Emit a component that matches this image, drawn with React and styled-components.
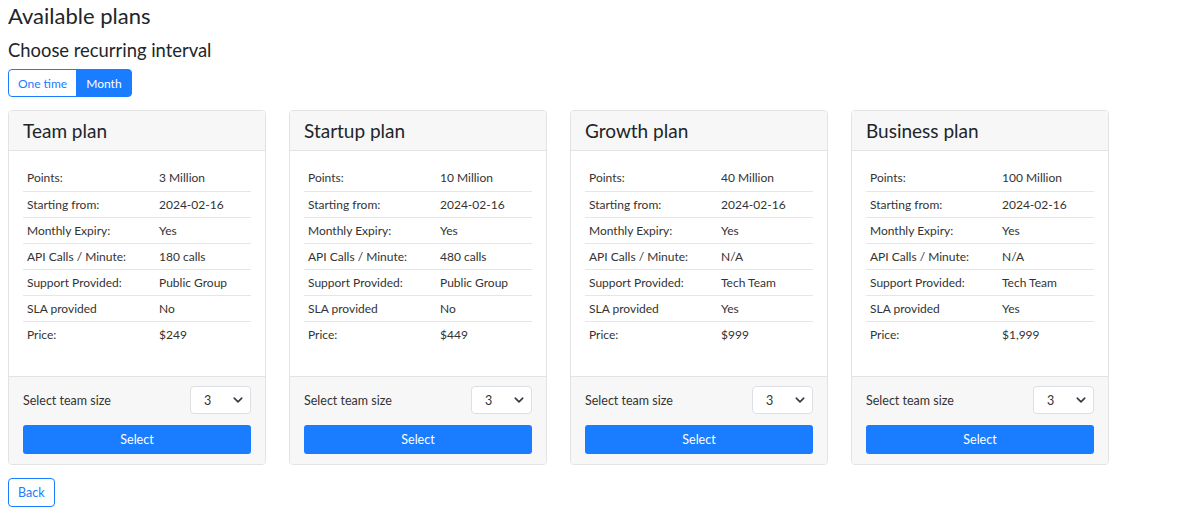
import React, { useState } from "react";
import styled, { createGlobalStyle } from "styled-components";

const Global = createGlobalStyle`
  html, body { margin: 0; padding: 0; background: #fff; }
  body { font-family: Lato, "Noto Sans", sans-serif; color: #212529; }
  * { box-sizing: border-box; }
`;

const Page = styled.div`
  padding: 3px 8px 8px;
  width: 1195px;
`;

const Title = styled.h1`
  font-size: 22px;
  font-weight: 400;
  margin: 0;
  line-height: 26px;
`;

const Subtitle = styled.h2`
  font-size: 18.4px;
  font-weight: 400;
  margin: 10px 0 8px;
  line-height: 22px;
`;

const Toggle = styled.div`
  display: inline-flex;
`;

const ToggleButton = styled.button`
  font-family: inherit;
  font-size: 12px;
  height: 28px;
  padding: 0 9px;
  border: 1px solid #1a7cff;
  background: ${(p) => (p.$active ? "#1a7cff" : "#fff")};
  color: ${(p) => (p.$active ? "#fff" : "#1a7cff")};
  cursor: pointer;
  border-radius: ${(p) => (p.$first ? "4px 0 0 4px" : "0 4px 4px 0")};
  margin-left: ${(p) => (p.$first ? "0" : "-1px")};
`;

const Grid = styled.div`
  display: grid;
  grid-template-columns: repeat(4, 258px);
  column-gap: 23px;
  margin-top: 13px;
`;

const Card = styled.div`
  border: 1px solid #e3e3e3;
  border-radius: 4px;
  display: flex;
  flex-direction: column;
  overflow: hidden;
`;

const CardHeader = styled.div`
  background: #f7f7f7;
  border-bottom: 1px solid #e3e3e3;
  height: 40px;
  display: flex;
  align-items: center;
  padding: 0 14px;
  font-size: 19px;
  line-height: 22px;
`;

const CardBody = styled.div`
  padding: 14px 14px 29px;
`;

const Table = styled.table`
  width: 100%;
  border-collapse: collapse;
  font-size: 12px;
  color: #333;
`;

const Row = styled.tr`
  height: 26px;
  & + & td { border-top: 1px solid #e3e6ea; }
`;

const Cell = styled.td`
  padding: 0 4px;
  vertical-align: middle;
  width: ${(p) => p.$w || "auto"};
`;

const CardFooter = styled.div`
  background: #f7f7f7;
  border-top: 1px solid #e3e3e3;
  padding: 9px 14px 10px;
  display: flex;
  flex-direction: column;
  gap: 11px;
`;

const SizeRow = styled.div`
  display: flex;
  align-items: center;
  justify-content: space-between;
  font-size: 12.5px;
  color: #333;
`;

const SelectBox = styled.div`
  width: 61px;
  height: 28px;
  background: #fff;
  border: 1px solid #dcdfe3;
  border-radius: 4px;
  display: flex;
  align-items: center;
  justify-content: space-between;
  padding: 0 7px 0 13px;
  font-size: 12.5px;
  color: #333;
`;

const PrimaryButton = styled.button`
  font-family: inherit;
  width: 100%;
  height: 29px;
  border: none;
  border-radius: 3px;
  background: #1a7cff;
  color: #fff;
  font-size: 12.5px;
  cursor: pointer;
`;

const BackButton = styled.button`
  font-family: inherit;
  margin-top: 13px;
  height: 29px;
  padding: 0 9px;
  border: 1px solid #1a7cff;
  border-radius: 4px;
  background: #fff;
  color: #1a7cff;
  font-size: 12.5px;
  cursor: pointer;
`;

const Chevron = () => (
  <svg width="10" height="10" viewBox="0 0 16 16" fill="none">
    <path d="M2 5l6 6 6-6" stroke="#343a40" strokeWidth="2.5" strokeLinecap="round" strokeLinejoin="round" />
  </svg>
);

const plans = [
  { name: "Team plan", points: "3 Million", api: "180 calls", support: "Public Group", sla: "No", price: "$249" },
  { name: "Startup plan", points: "10 Million", api: "480 calls", support: "Public Group", sla: "No", price: "$449" },
  { name: "Growth plan", points: "40 Million", api: "N/A", support: "Tech Team", sla: "Yes", price: "$999" },
  { name: "Business plan", points: "100 Million", api: "N/A", support: "Tech Team", sla: "Yes", price: "$1,999" },
];

export default function App() {
  const [interval, setInterval] = useState("month");
  return (
    <Page>
      <Global />
      <Title>Available plans</Title>
      <Subtitle>Choose recurring interval</Subtitle>
      <Toggle>
        <ToggleButton $first $active={interval === "once"} onClick={() => setInterval("once")}>One time</ToggleButton>
        <ToggleButton $active={interval === "month"} onClick={() => setInterval("month")}>Month</ToggleButton>
      </Toggle>
      <Grid>
        {plans.map((p) => {
          const rows = [
            ["Points:", p.points],
            ["Starting from:", "2024-02-16"],
            ["Monthly Expiry:", "Yes"],
            ["API Calls / Minute:", p.api],
            ["Support Provided:", p.support],
            ["SLA provided", p.sla],
            ["Price:", p.price],
          ];
          return (
            <Card key={p.name}>
              <CardHeader>{p.name}</CardHeader>
              <CardBody>
                <Table>
                  <tbody>
                    {rows.map(([k, v]) => (
                      <Row key={k}>
                        <Cell $w="132px">{k}</Cell>
                        <Cell>{v}</Cell>
                      </Row>
                    ))}
                  </tbody>
                </Table>
              </CardBody>
              <CardFooter>
                <SizeRow>
                  <span>Select team size</span>
                  <SelectBox>
                    <span>3</span>
                    <Chevron />
                  </SelectBox>
                </SizeRow>
                <PrimaryButton>Select</PrimaryButton>
              </CardFooter>
            </Card>
          );
        })}
      </Grid>
      <BackButton>Back</BackButton>
    </Page>
  );
}
